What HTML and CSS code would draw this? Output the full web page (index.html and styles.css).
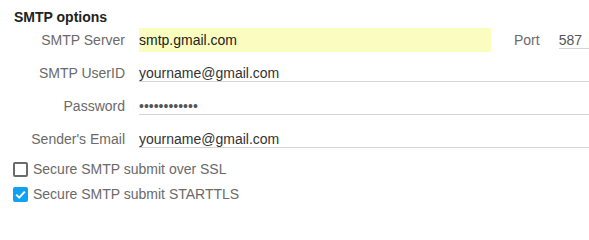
FILE: index.html
```html
<!DOCTYPE html>
<html>
<head>
<meta charset="utf-8">
<link rel="stylesheet" href="styles.css">
</head>
<body>
<div class="panel">
  <div class="title">SMTP options</div>
  <div class="row">
    <div class="label">SMTP Server</div>
    <div class="field autofill">smtp.gmail.com</div>
    <div class="port-label">Port</div>
    <div class="field port">587</div>
  </div>
  <div class="row">
    <div class="label">SMTP UserID</div>
    <div class="field">yourname@gmail.com</div>
  </div>
  <div class="row">
    <div class="label">Password</div>
    <div class="field secret">••••••••••••</div>
  </div>
  <div class="row">
    <div class="label">Sender's Email</div>
    <div class="field">yourname@gmail.com</div>
  </div>
  <div class="check-row">
    <span class="box"></span>
    <span class="check-label">Secure SMTP submit over SSL</span>
  </div>
  <div class="check-row">
    <span class="box checked">
      <svg width="15" height="15" viewBox="0 0 15 15"><path d="M3.2 7.6 L6.2 10.6 L11.8 4.6" fill="none" stroke="#fff" stroke-width="2"/></svg>
    </span>
    <span class="check-label">Secure SMTP submit STARTTLS</span>
  </div>
</div>
</body>
</html>
```

FILE: styles.css
```css
html, body {
  margin: 0;
  padding: 0;
  background: #fff;
}
body {
  font-family: "Liberation Sans", Arial, sans-serif;
  font-size: 14px;
  width: 589px;
  overflow: hidden;
}
.panel {
  padding-top: 9px;
}
.title {
  font-weight: bold;
  font-size: 14px;
  line-height: 16px;
  color: #222;
  margin-left: 14px;
}
.row {
  display: flex;
  align-items: baseline;
  height: 33px;
}
.label {
  width: 125px;
  flex: none;
  text-align: right;
  color: #6a6a6a;
  line-height: 16px;
  margin-right: 14px;
}
.field {
  flex: 1;
  height: 16px;
  line-height: 16px;
  padding-top: 7px;
  border-bottom: 1px solid #d4d4d4;
  color: #333;
  white-space: nowrap;
}
.field.autofill {
  flex: none;
  width: 352px;
  padding-top: 4px;
  height: 20px;
  border-bottom: none;
  background: #fafdbf;
  color: #222;
}
.port-label {
  flex: none;
  margin-left: 23px;
  margin-right: 19px;
  color: #6a6a6a;
  line-height: 16px;
}
.field.port {
  flex: none;
  width: 30px;
  color: #555;
}
.field.secret {
  color: #555;
}
.check-row {
  display: flex;
  align-items: center;
  height: 25px;
  line-height: 25px;
  padding-left: 13px;
}
.box {
  width: 15px;
  height: 15px;
  box-sizing: border-box;
  border: 2px solid #6b6b6b;
  border-radius: 2px;
  margin-right: 5px;
  flex: none;
}
.box.checked {
  border: none;
  background: #10a2f2;
}
.box svg {
  display: block;
}
.check-label {
  color: #6a6a6a;
}
```
